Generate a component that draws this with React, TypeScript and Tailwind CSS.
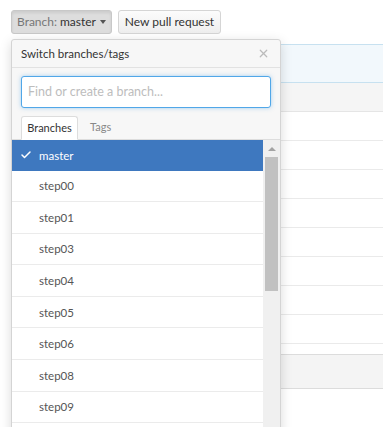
import { Check, X } from "lucide-react"

const branches = ["step00", "step01", "step03", "step04", "step05", "step06", "step08", "step09"]

const BranchMenu = () => (
  <div className="absolute left-[11px] top-[39px] w-[270px] h-[420px] bg-[#f7f7f7] border border-[#d4d4d4] rounded-t-[3px] shadow-[0_3px_12px_rgba(0,0,0,0.15)] overflow-hidden flex flex-col">
    <div className="h-[28px] shrink-0 flex items-center justify-between pl-[9px] pr-[10px] border-b border-[#e2e2e2] text-[11.5px] text-[#333]">
      <span>Switch branches/tags</span>
      <X className="w-[13px] h-[13px] text-[#bbb]" strokeWidth={2.2} />
    </div>
    <div className="px-[9px] pt-[8px] shrink-0">
      <div className="h-[32px] bg-white border border-[#51a7e8] rounded-[3px] shadow-[0_0_4px_rgba(81,167,232,0.5)] flex items-center px-[6px] text-[12.5px] text-[#bdbdbd]">
        Find or create a branch...
      </div>
    </div>
    <div className="mt-[9px] shrink-0 flex items-end h-[23px] pl-[9px] border-b border-[#ddd] text-[11px]">
      <div className="h-[24px] -mb-px w-[57px] flex items-center justify-center bg-white border border-[#ddd] border-b-white rounded-t-[3px] text-[#333]">
        Branches
      </div>
      <div className="h-[23px] px-[12px] flex items-center text-[#888]">Tags</div>
    </div>
    <div className="flex flex-1 bg-white">
      <div className="flex-1 flex flex-col">
        <div className="h-[30.5px] shrink-0 bg-[#3e78bf] flex items-center text-white text-[11.5px]">
          <Check className="w-[12px] h-[12px] ml-[8px] mr-[7px]" strokeWidth={3} />
          <span>master</span>
        </div>
        {branches.map((name) => (
          <div
            key={name}
            className="h-[31.6px] shrink-0 flex items-center pl-[27px] border-b border-[#ebebeb] text-[11.5px] text-[#555]"
          >
            {name}
          </div>
        ))}
      </div>
      <div className="w-[17px] bg-[#f0f0f0] flex flex-col items-center">
        <div className="h-[17px] flex items-center justify-center">
          <div className="w-0 h-0 border-l-[4px] border-r-[4px] border-b-[4px] border-l-transparent border-r-transparent border-b-[#a3a3a3]" />
        </div>
        <div className="w-[13px] h-[134px] bg-[#c1c1c1]" />
      </div>
    </div>
  </div>
)

export default function App() {
  return (
    <div
      className="relative w-[383px] h-[427px] overflow-hidden bg-white"
      style={{ fontFamily: "Lato, 'Open Sans', sans-serif" }}
    >
      <div className="flex gap-[6px] pl-[11px] pt-[10px]">
        <div className="h-[24px] w-[101px] flex items-center justify-center gap-[3px] rounded-[3px] border border-[#c8c8c8] bg-[#dddddd] shadow-[inset_0_2px_3px_rgba(0,0,0,0.08)] text-[12px]">
          <span className="text-[#777]">Branch:</span>
          <span className="text-[#333]">master</span>
          <span className="w-0 h-0 ml-[1px] border-l-[3px] border-r-[3px] border-t-[4px] border-l-transparent border-r-transparent border-t-[#555]" />
        </div>
        <div className="h-[24px] w-[103px] flex items-center justify-center rounded-[3px] border border-[#d5d5d5] bg-gradient-to-b from-[#fcfcfc] to-[#eeeeee] text-[12px] text-[#333]">
          New pull request
        </div>
      </div>
      <div className="ml-[11px] mt-[10px] w-[400px]">
        <div className="h-[39px] bg-[#f2f8fc] border-y border-[#c7e1f0]" />
        <div className="h-[29px] bg-[#f5f5f5] border-b border-[#e5e5e5]" />
        {Array.from({ length: 8 }).map((_, i) => (
          <div key={i} className="h-[29px] border-b border-[#eaeaea]" />
        ))}
        <div className="mt-[10px] h-[35px] bg-[#f4f4f4] border-y border-[#dcdcdc]" />
      </div>
      <BranchMenu />
    </div>
  )
}
